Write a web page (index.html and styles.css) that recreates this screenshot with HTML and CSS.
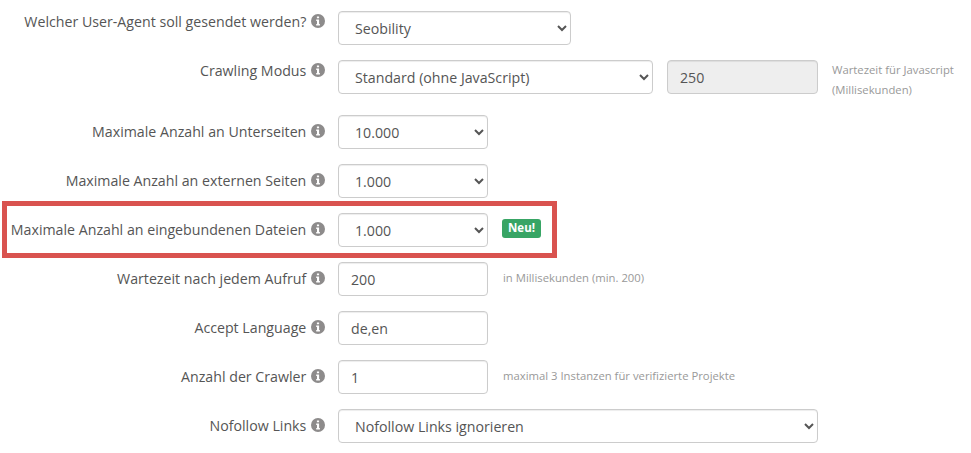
FILE: index.html
```html
<!DOCTYPE html>
<html lang="de">
<head>
<meta charset="utf-8">
<title>Crawler Einstellungen</title>
<link rel="stylesheet" href="styles.css">
</head>
<body>
<svg class="sprite" width="0" height="0" aria-hidden="true">
  <symbol id="info" viewBox="0 0 14 14">
    <circle cx="7" cy="7" r="7" fill="#8d8b8b"/>
    <path fill="#fff" d="M5.9 2.4h2.2v1.9H5.9zM5.2 5.4h2.9v4.5h.8v1.6H5.2V9.9h.8V7H5.2z"/>
  </symbol>
</svg>
<form class="form">
  <div class="row">
    <label class="label label-top">Welcher User-Agent soll gesendet werden? <svg class="info"><use href="#info"/></svg></label>
    <select class="control w-233"><option>Seobility</option></select>
  </div>
  <div class="row row-tall">
    <label class="label label-top">Crawling Modus <svg class="info"><use href="#info"/></svg></label>
    <select class="control w-315"><option>Standard (ohne JavaScript)</option></select>
    <input class="control input-disabled" value="250" disabled>
    <p class="help help-two">Wartezeit für Javascript<br>(Millisekunden)</p>
  </div>
  <div class="row">
    <label class="label">Maximale Anzahl an Unterseiten <svg class="info"><use href="#info"/></svg></label>
    <select class="control w-150"><option>10.000</option></select>
  </div>
  <div class="row">
    <label class="label">Maximale Anzahl an externen Seiten <svg class="info"><use href="#info"/></svg></label>
    <select class="control w-150"><option>1.000</option></select>
  </div>
  <div class="row row-marked">
    <label class="label">Maximale Anzahl an eingebundenen Dateien <svg class="info"><use href="#info"/></svg></label>
    <select class="control w-150"><option>1.000</option></select>
    <span class="badge">Neu!</span>
  </div>
  <div class="row">
    <label class="label">Wartezeit nach jedem Aufruf <svg class="info"><use href="#info"/></svg></label>
    <input class="control w-150" value="200">
    <p class="help">in Millisekunden (min. 200)</p>
  </div>
  <div class="row">
    <label class="label">Accept Language <svg class="info"><use href="#info"/></svg></label>
    <input class="control w-150" value="de,en">
  </div>
  <div class="row">
    <label class="label">Anzahl der Crawler <svg class="info"><use href="#info"/></svg></label>
    <input class="control w-150" value="1">
    <p class="help">maximal 3 Instanzen für verifizierte Projekte</p>
  </div>
  <div class="row">
    <label class="label">Nofollow Links <svg class="info"><use href="#info"/></svg></label>
    <select class="control w-480"><option>Nofollow Links ignorieren</option></select>
  </div>
</form>
</body>
</html>
```
FILE: styles.css
```css
*, *::after { box-sizing: border-box; }
html, body { margin: 0; background: #fff; }
body {
  font-family: "Open Sans", "Liberation Sans", sans-serif;
  font-size: 14.2px;
  line-height: 20px;
  color: #555;
  overflow: hidden;
}
.sprite { position: absolute; }
.form { padding-top: 11px; }
.row {
  display: flex;
  align-items: flex-start;
  height: 34px;
  margin-bottom: 15px;
}
.row-tall { height: 40px; }
.row-marked { position: relative; }
.row-marked::after {
  content: "";
  position: absolute;
  left: 2px;
  top: -12px;
  width: 555px;
  height: 57px;
  border: 5px solid #d9534f;
  pointer-events: none;
}
.label {
  flex: none;
  width: 325px;
  margin-right: 13px;
  padding-top: 7px;
  text-align: right;
  white-space: nowrap;
}
.label-top { padding-top: 1px; }
.info {
  width: 14px;
  height: 14px;
  vertical-align: -1px;
  margin-left: 1px;
}
.control {
  flex: none;
  height: 34px;
  padding: 6px 12px;
  font: inherit;
  color: #555;
  background: #fff;
  border: 1px solid #ccc;
  border-radius: 4px;
  box-shadow: inset 0 1px 1px rgba(0, 0, 0, .075);
}
.w-150 { width: 150px; }
.w-233 { width: 233px; }
.w-315 { width: 315px; }
.w-480 { width: 480px; }
.input-disabled {
  width: 151px;
  margin-left: 14px;
  background: #eee;
  opacity: 1;
}
.help {
  margin: 0 0 0 15px;
  padding-top: 6px;
  font-size: 11.3px;
  line-height: 20px;
  color: #999;
  white-space: nowrap;
}
.help-two { padding-top: 0; margin-left: 14px; }
.badge {
  align-self: flex-start;
  margin: 6px 0 0 14px;
  width: 39px;
  height: 19px;
  border-radius: 3px;
  background: #38a565;
  color: #fff;
  font-size: 11.5px;
  font-weight: 700;
  line-height: 17px;
  text-align: center;
}
```
